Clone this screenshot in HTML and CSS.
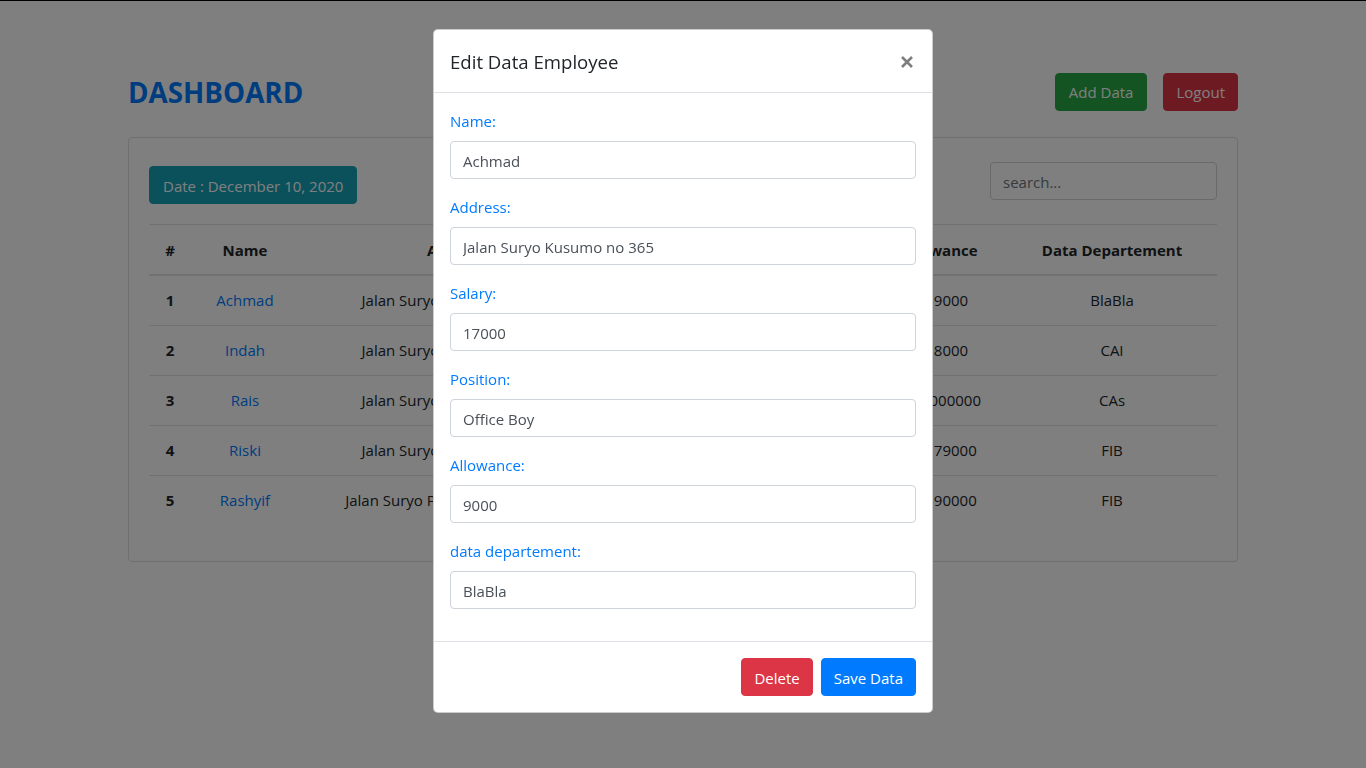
FILE: index.html
```html
<!DOCTYPE html>
<html lang="en">
<head>
<meta charset="utf-8">
<title>Dashboard</title>
<link rel="stylesheet" href="styles.css">
</head>
<body>
<div class="topline"></div>
<div class="container">
  <header class="page-head">
    <h3 class="page-title">DASHBOARD</h3>
    <div class="actions">
      <button class="btn btn-success">Add Data</button>
      <button class="btn btn-danger">Logout</button>
    </div>
  </header>
  <div class="card">
    <div class="card-body">
      <div class="toolbar">
        <button class="btn btn-info date-btn">Date : December 10, 2020</button>
        <input class="form-control search" type="text" placeholder="search...">
      </div>
      <table class="table">
        <colgroup>
          <col class="c-no"><col class="c-name"><col class="c-addr"><col class="c-sal"><col class="c-pos"><col class="c-allow"><col class="c-dept">
        </colgroup>
        <thead>
          <tr><th>#</th><th>Name</th><th>Address</th><th>Salary</th><th>Position</th><th class="th-allow">Allowance</th><th>Data Departement</th></tr>
        </thead>
        <tbody>
          <tr><th>1</th><td><a class="name-link">Achmad</a></td><td>Jalan Suryo Kusumo no 365</td><td>17000</td><td>Office Boy</td><td>9000</td><td>BlaBla</td></tr>
          <tr><th>2</th><td><a class="name-link">Indah</a></td><td>Jalan Suryo Kusumo no 365</td><td>15000</td><td>Staff</td><td>8000</td><td>CAI</td></tr>
          <tr><th>3</th><td><a class="name-link">Rais</a></td><td>Jalan Suryo Kusumo no 365</td><td>20000</td><td>Manager</td><td>1000000</td><td>CAs</td></tr>
          <tr><th>4</th><td><a class="name-link">Riski</a></td><td>Jalan Suryo Kusumo no 365</td><td>18000</td><td>Staff</td><td>179000</td><td>FIB</td></tr>
          <tr><th>5</th><td><a class="name-link">Rashyif</a></td><td>Jalan Suryo Pranoto no 365 Blok</td><td>19000</td><td>Staff</td><td>190000</td><td>FIB</td></tr>
        </tbody>
      </table>
    </div>
  </div>
</div>

<div class="backdrop"></div>

<div class="modal">
  <div class="modal-dialog">
    <div class="modal-content">
      <div class="modal-header">
        <h5 class="modal-title">Edit Data Employee</h5>
        <button class="close" aria-label="Close">
          <svg width="12" height="12" viewBox="0 0 12 12"><path d="M1 1 L11 11 M11 1 L1 11" stroke="#000" stroke-width="2.6" stroke-linecap="butt"/></svg>
        </button>
      </div>
      <div class="modal-body">
        <div class="form-group"><label class="lbl">Name:</label><input class="form-control" type="text" value="Achmad"></div>
        <div class="form-group"><label class="lbl">Address:</label><input class="form-control" type="text" value="Jalan Suryo Kusumo no 365"></div>
        <div class="form-group"><label class="lbl">Salary:</label><input class="form-control" type="text" value="17000"></div>
        <div class="form-group"><label class="lbl">Position:</label><input class="form-control" type="text" value="Office Boy"></div>
        <div class="form-group"><label class="lbl">Allowance:</label><input class="form-control" type="text" value="9000"></div>
        <div class="form-group"><label class="lbl">data departement:</label><input class="form-control" type="text" value="BlaBla"></div>
      </div>
      <div class="modal-footer">
        <button class="btn btn-danger">Delete</button>
        <button class="btn btn-primary">Save Data</button>
      </div>
    </div>
  </div>
</div>
</body>
</html>
```
FILE: styles.css
```css
* { box-sizing: border-box; }
html, body { margin: 0; padding: 0; }
body {
  font-family: "Open Sans", "Noto Sans", sans-serif;
  font-size: 15px;
  line-height: 24px;
  color: #212529;
  background: #fff;
}
.topline { height: 1px; background: #000; }

.container {
  width: 1110px;
  margin: 0 auto;
  padding-top: 72px;
}
.page-head {
  display: flex;
  align-items: center;
  justify-content: space-between;
  height: 38px;
  margin-bottom: 26px;
}
.page-title {
  margin: 0;
  font-size: 27.8px;
  line-height: 34px;
  font-weight: 700;
  color: #007bff;
}
.actions { display: flex; gap: 16px; }

.btn {
  display: inline-block;
  font-family: inherit;
  font-size: 15px;
  line-height: 24px;
  padding: 6px 12px;
  border: 1px solid transparent;
  border-radius: 4px;
  color: #fff;
  cursor: pointer;
}
.btn-success { background: #28a745; border-color: #28a745; }
.btn-danger { background: #dc3545; border-color: #dc3545; }
.btn-info { background: #17a2b8; border-color: #17a2b8; }
.btn-primary { background: #007bff; border-color: #007bff; }
.actions .btn-success { padding-left: 13px; padding-right: 13px; }

.card {
  border: 1px solid rgba(0,0,0,.125);
  border-radius: 4px;
}
.card-body { padding: 20px; }
.toolbar {
  display: flex;
  justify-content: space-between;
  align-items: flex-start;
  margin-bottom: 20px;
}
.date-btn { margin-top: 8px; padding: 7px 13px 5px; }
.form-control {
  display: block;
  width: 100%;
  height: 38px;
  padding: 7px 12px 5px;
  font-family: inherit;
  font-size: 15px;
  line-height: 24px;
  color: #495057;
  background: #fff;
  border: 1px solid #ced4da;
  border-radius: 4px;
}
.form-control::placeholder { color: #6c757d; }
.search { width: 227px; margin-top: 4px; }

.table {
  width: 100%;
  table-layout: fixed;
  border-collapse: collapse;
  margin-bottom: 16px;
}
.c-no { width: 42px; }
.c-name { width: 108px; }
.c-addr { width: 316px; }
.c-sal { width: 140px; }
.c-pos { width: 140px; }
.c-allow { width: 112px; }
.c-dept { width: 210px; }
.table th, .table td {
  padding: 12px;
  line-height: 25px;
  text-align: center;
  border-top: 1px solid #dee2e6;
  white-space: nowrap;
  overflow: hidden;
}
.table th { font-weight: 700; }
.table thead th { border-bottom: 2px solid #dee2e6; padding-top: 13px; padding-bottom: 11px; }
.table thead .th-allow { padding-right: 24px; padding-left: 0; }
.name-link { color: #007bff; text-decoration: none; }

.backdrop {
  position: fixed;
  inset: 0;
  background: rgba(0,0,0,.5);
}
.modal {
  position: fixed;
  inset: 0;
  overflow: hidden;
}
.modal-dialog {
  max-width: 500px;
  margin: 29px auto;
}
.modal-content {
  display: flex;
  flex-direction: column;
  background: #fff;
  border: 1px solid rgba(0,0,0,.2);
  border-radius: 5px;
}
.modal-header {
  display: flex;
  align-items: flex-start;
  padding: 16px;
  border-bottom: 1px solid #dee2e6;
}
.modal-title {
  margin: 0;
  font-size: 18.6px;
  padding-top: 2px;
  line-height: 28px;
  font-weight: 400;
  color: #212529;
}
.close {
  margin: 10px 3px 0 auto;
  padding: 0;
  width: 12px;
  height: 12px;
  background: none;
  border: 0;
  opacity: .5;
  display: flex;
}
.modal-body { padding: 16px; }
.form-group { margin-bottom: 16px; }
.lbl {
  display: inline-block;
  margin-bottom: 8px;
  color: #007bff;
}
.modal-footer {
  display: flex;
  justify-content: flex-end;
  align-items: center;
  padding: 12px;
  border-top: 1px solid #dee2e6;
}
.modal-footer .btn { margin: 4px; padding-top: 7px; padding-bottom: 5px; }
```
